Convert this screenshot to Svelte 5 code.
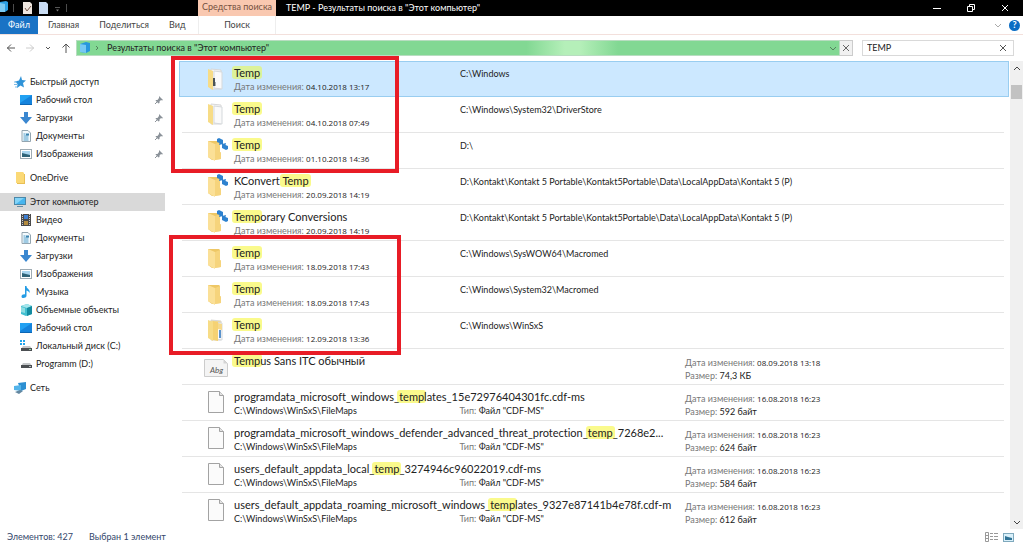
<script>
	let query = 'TEMP'

	const tabs = ['Главная', 'Поделиться', 'Вид']

	const groups = [
		{
			name: 'Быстрый доступ', icon: 'star', items: [
				{ name: 'Рабочий стол', icon: 'desktop', pinned: true },
				{ name: 'Загрузки', icon: 'download', pinned: true },
				{ name: 'Документы', icon: 'doc', pinned: true },
				{ name: 'Изображения', icon: 'picture', pinned: true }
			]
		},
		{ name: 'OneDrive', icon: 'folder', items: [] },
		{
			name: 'Этот компьютер', icon: 'pc', current: true, items: [
				{ name: 'Видео', icon: 'video' },
				{ name: 'Документы', icon: 'doc' },
				{ name: 'Загрузки', icon: 'download' },
				{ name: 'Изображения', icon: 'picture' },
				{ name: 'Музыка', icon: 'music' },
				{ name: 'Объемные объекты', icon: 'cube' },
				{ name: 'Рабочий стол', icon: 'desktop' },
				{ name: 'Локальный диск (C:)', icon: 'sysdisk' },
				{ name: 'Programm (D:)', icon: 'disk' }
			]
		},
		{ name: 'Сеть', icon: 'network', items: [] }
	]

	const maps = 'C:\\Windows\\WinSxS\\FileMaps'
	const kontakt = 'D:\\Kontakt\\Kontakt 5 Portable\\Kontakt5Portable\\Data\\LocalAppData\\Kontakt 5 (P)'

	const folders = [
		{ name: 'Temp', date: '04.10.2018 13:17', path: 'C:\\Windows', icon: 'dark', selected: true },
		{ name: 'Temp', date: '04.10.2018 07:49', path: 'C:\\Windows\\System32\\DriverStore', icon: 'open' },
		{ name: 'Temp', date: '01.10.2018 14:36', path: 'D:\\', icon: 'packed' },
		{ name: 'KConvert Temp', date: '20.09.2018 14:19', path: kontakt, icon: 'packed' },
		{ name: 'Temporary Conversions', date: '20.09.2018 14:19', path: kontakt, icon: 'packed' },
		{ name: 'Temp', date: '18.09.2018 17:43', path: 'C:\\Windows\\SysWOW64\\Macromed', icon: 'plain' },
		{ name: 'Temp', date: '18.09.2018 17:43', path: 'C:\\Windows\\System32\\Macromed', icon: 'plain' },
		{ name: 'Temp', date: '12.09.2018 13:36', path: 'C:\\Windows\\WinSxS', icon: 'filled' }
	]

	const files = [
		{ name: 'Tempus Sans ITC обычный', date: '08.09.2018 13:18', size: '74,3 КБ', icon: 'font' },
		{ name: 'programdata_microsoft_windows_templates_15e72976404301fc.cdf-ms', path: maps, date: '16.08.2018 16:23', size: '592 байт', icon: 'file' },
		{ name: 'programdata_microsoft_windows_defender_advanced_threat_protection_temp_7268e2...', path: maps, date: '16.08.2018 16:23', size: '624 байт', icon: 'file' },
		{ name: 'users_default_appdata_local_temp_3274946c96022019.cdf-ms', path: maps, date: '16.08.2018 16:23', size: '584 байт', icon: 'file' },
		{ name: 'users_default_appdata_roaming_microsoft_windows_templates_9327e87141b4e78f.cdf-m', path: maps, date: '16.08.2018 16:23', size: '612 байт', icon: 'file' }
	]

	// cut the name into plain and matching pieces
	const split = (name) => name.split(/(temp)/i).filter((s) => s)
	const isHit = (s) => s.toLowerCase() === 'temp'
</script>

{#snippet small(name)}
	<svg class="small" viewBox="0 0 12 12" aria-hidden="true">
		{#if name === 'star'}
			<path d="M7 0l1 4 4 .5-3 2.500 1 4.500-3.500-2L3 12l.5-4L1 5.500l4-1z" fill="#2f93d8" />
			<path d="M0 6h3M0 8.500h3M1 11h2" stroke="#7dbbe6" />
		{:else if name === 'desktop'}
			<rect y="1" width="12" height="10" fill="#1583dc" />
			<path d="M0 1h12L0 9z" fill="#22a1f2" />
			<path d="M0 10.500h12" stroke="#0c66b4" />
		{:else if name === 'download'}
			<path d="M4 0h4v5h4L6 12 0 5h4z" fill="#3a87d0" />
		{:else if name === 'doc'}
			<path d="M2 .5h6l2.500 2.500v8.500H2z" fill="#f4fafd" stroke="#93a5b0" />
			<path d="M3.500 4h2M3.500 6h5M3.500 8h5M3.500 10h5" stroke="#4c9cc9" />
			<path d="M6 4.500h3" stroke="#3b83ae" stroke-width="2" />
		{:else if name === 'picture'}
			<rect x=".5" y="1.500" width="11" height="9" fill="#fff" stroke="#9eabb3" />
			<path d="M2 3h8v6H2z" fill="#a9d5ee" />
			<path d="M2 5l4 1 4 1v2H2z" fill="#2f6478" />
		{:else if name === 'folder'}
			<path d="M2 0h7l1 1v10H2z" fill="#fbd976" />
			<path d="M10 2h1v10H3v-1h7z" fill="#e9bf55" />
		{:else if name === 'pc'}
			<rect x=".5" y="1.500" width="11" height="7" fill="#47b5ee" stroke="#4b88a9" />
			<path d="M1 2h9L2 8H1z" fill="#83d4f8" />
			<path d="M3 10.500h6" stroke="#668da3" />
		{:else if name === 'video'}
			<rect x="1" width="10" height="12" fill="#4a4a4a" />
			<path d="M2.500 0v12M9.500 0v12" stroke="#ccc" stroke-dasharray="1 1" />
			<path d="M4 1h4v4H4z" fill="#3d7ed0" />
			<path d="M4 7h4v4H4z" fill="#b48b3e" />
		{:else if name === 'music'}
			<path d="M5 0h1.500c0 3 4 3 3 7-1-2-2-2-3-2.500V10c0 2-5 3-5 .5C1.500 8.500 4 8 5 8.500z" fill="#249ce5" />
		{:else if name === 'cube'}
			<path d="M1 2l6-2 5 2v8l-6 2-5-2z" fill="#42bfd0" />
			<path d="M1 2l6-2 5 2-5 2z" fill="#a5e5eb" />
			<path d="M7 4l5-2v8l-5 2z" fill="#138ba0" />
			<path d="M1 3l4 1v5L1 8z" fill="#8fdde2" />
		{:else if name === 'sysdisk'}
			<path d="M0 0h2v2H0zM3 0h2v2H3zM0 3h2v2H0zM3 3h2v2H3z" fill="#21a5ec" />
			<path d="M3 6h7l2 3H1z" fill="#c4c7c9" />
			<path d="M1 8h11v3H1z" fill="#4b4f52" />
			<path d="M9 9.500h2" stroke="#8fd2a0" />
		{:else if name === 'disk'}
			<path d="M3 5h7l2 3H1z" fill="#c4c7c9" />
			<path d="M1 7h11v3H1z" fill="#4b4f52" />
			<path d="M9 8.500h2" stroke="#b8bcbf" />
		{:else if name === 'network'}
			<path d="M4 1l8-1v7l-5 2z" fill="#2c8fd2" />
			<path d="M0 4l7-1v6l-7-1z" fill="#53b4ea" />
			<path d="M1 10l4 2 4-3-3-1z" fill="#6387a0" />
		{/if}
	</svg>
{/snippet}

{#snippet large(name)}
	<svg class="large" viewBox="0 0 28 26" aria-hidden="true">
		{#if name === 'file'}
			<path d="M6.500 2.500h11l4 4v17h-15z" fill="#fbfbfb" stroke="#a3a3a3" />
			<path d="M17.500 2.500v4h4" fill="#e4e4e4" stroke="#a3a3a3" />
		{:else if name === 'font'}
			<path d="M2.500 6.500h19l4 4v13h-23z" fill="#f4f4f4" stroke="#ccc" />
			<path d="M21.500 6.500v4h4z" fill="#d4d4d4" />
			<text x="8" y="20" font-size="8" font-style="italic" fill="#555">Abg</text>
		{:else}
			{#if name === 'open' || name === 'dark' || name === 'filled'}
				<path d="M9 3l10 1v19H9z" fill={name === 'filled' ? '#f4d98a' : '#f4f4f4'} stroke="#d8d8d8" />
				<path d="M12 5l8 1v17l-8-1z" fill="#fafafa" stroke="#d5d9dc" />
				<path d="M6 3l5 2v19l-5-3z" fill="#f7dc86" />
				{#if name === 'dark'}
					<path d="M11 12h2v8h-2z" fill="#495357" />
					<path d="M13 16h1v4h-1z" fill="#a5adb0" />
				{:else if name === 'filled'}
					<path d="M11 4l5 1v19l-5-1z" fill="#f5d273" />
					<path d="M16 6l4 1v6l-4-1z" fill="#f5d98c" />
					<path d="M17 13h2v8h-2z" fill="#5b93cc" />
				{/if}
			{:else}
				<path d="M6 4h11l1 1v10l1 1v6l-9 1-4-3z" fill="#eec765" />
				<path d="M6 4l7 3v17l-7-4z" fill="#fbe097" />
				<path d="M13 7l5-2v10l1 1v6l-6 1z" fill="#f6d47c" />
			{/if}
			{#if name === 'packed'}
				<path d="M15 2l2-1 2 1 2 1v4l-4 1 .5-2-2.500-1z" fill="#2e82cf" />
				<path d="M26 12l-2 1-2-1-2-1V7l4-1-.5 2 2.500 1z" fill="#2e82cf" />
			{/if}
		{/if}
	</svg>
{/snippet}

{#snippet title(name)}
	<div class="title">{#each split(name) as part}{#if isHit(part)}<mark>{part}</mark>{:else}<span>{part}</span>{/if}{/each}</div>
{/snippet}

{#snippet cross()}
	<svg class="glyph" viewBox="0 0 8 8" aria-hidden="true"><path d="M1 1l6 6M7 1L1 7" /></svg>
{/snippet}

{#snippet chevron()}
	<svg class="glyph" viewBox="0 0 8 8" aria-hidden="true"><path d="M1 3l3 3 3-3" /></svg>
{/snippet}

<div class="window">
	<header class="titlebar">
		<div class="quick">
			<svg width="70" height="16" viewBox="0 0 70 16" aria-hidden="true">
				<path d="M0 2l6-1 2 1v8l-3 2H0z" fill="#2c9fe3" />
				<path d="M0 3l5 1v8H0z" fill="#7ccaf3" />
				<path d="M13.500 4v8M66.500 4v8" stroke="#4c4c4c" />
				<path d="M23 2h7l2 2v10h-9z" fill="#eee6df" />
				<path d="M25 8l2 3 4-5" fill="none" stroke="#7a5a4c" />
				<path d="M39 2h7l2 2v10h-9z" fill="#c9dcf3" />
				<path d="M55 7.500h5" stroke="#555" />
				<path d="M56 9.500h3l-1.500 2z" fill="#777" />
			</svg>
		</div>
		<div class="context">Средства поиска</div>
		<h1>TEMP - Результаты поиска в "Этот компьютер"</h1>
		<div class="controls">
			<button aria-label="Свернуть"><svg class="glyph" viewBox="0 0 8 8"><path d="M0 4.500h8" /></svg></button>
			<button aria-label="Свернуть в окно"><svg class="glyph" viewBox="0 0 8 8"><path d="M.5 2.500h5v5h-5zM2.500 2V.5h5v5H6" /></svg></button>
			<button aria-label="Закрыть">{@render cross()}</button>
		</div>
	</header>

	<nav class="ribbon">
		<div class="tabs">
			<button class="file">Файл</button>
			{#each tabs as tab}
				<button>{tab}</button>
			{/each}
		</div>
		<button class="search-tab">Поиск</button>
		<div class="ribbon-end">
			<button class="expand" aria-label="Развернуть ленту">{@render chevron()}</button>
			<button class="help" aria-label="Справка">?</button>
		</div>
	</nav>

	<div class="toolbar">
		<div class="arrows">
			<button aria-label="Назад"><svg width="10" height="10" viewBox="0 0 10 10"><path d="M9 5H1M5 1.500L1.500 5 5 8.500" /></svg></button>
			<button class="off" aria-label="Вперед"><svg width="10" height="10" viewBox="0 0 10 10"><path d="M1 5h8M5 1.500L8.500 5 5 8.500" /></svg></button>
			<button class="recent" aria-label="Последние расположения"><svg width="8" height="8" viewBox="0 0 8 8"><path d="M2 3l2 2 2-2" /></svg></button>
			<button aria-label="Вверх"><svg width="10" height="10" viewBox="0 0 10 10"><path d="M5 10V1M1.500 4.500L5 1l3.500 3.500" /></svg></button>
		</div>
		<div class="address">
			<svg width="12" height="12" viewBox="0 0 12 12" aria-hidden="true">
				<path d="M1 2l6-2 4 1v8l-4 2-6-1z" fill="#2797dd" />
				<path d="M1 2l6 1v8l-6-1z" fill="#77c9f3" />
			</svg>
			<svg width="4" height="6" viewBox="0 0 4 6" aria-hidden="true"><path d="M1 1l2 2-2 2" fill="none" stroke="#55805f" /></svg>
			<span class="crumb">Результаты поиска в "Этот компьютер"</span>
			<button class="drop" aria-label="Предыдущие расположения">{@render chevron()}</button>
		</div>
		<button class="stop" aria-label="Остановить">{@render cross()}</button>
		<div class="search">
			<input bind:value={query} aria-label="Поиск" />
			<button aria-label="Очистить">{@render cross()}</button>
		</div>
	</div>

	<div class="body">
		<aside>
			{#each groups as group}
				<div class="group">
					<a href="#top" class:current={group.current}>
						{@render small(group.icon)}
						<span>{group.name}</span>
					</a>
					{#each group.items as item}
						<a href="#top" class="child">
							{@render small(item.icon)}
							<span>{item.name}</span>
							{#if item.pinned}
								<svg class="pin" viewBox="0 0 8 8" aria-hidden="true">
									<path d="M4 0l4 4-1 .5-1-.5-1.500 1.500V7L3.500 7.500.5 4.500 1 4h1.500L4 2z" fill="#8b9299" />
									<path d="M2.500 5.500L0 8" stroke="#8b9299" />
								</svg>
							{/if}
						</a>
					{/each}
				</div>
			{/each}
		</aside>

		<main>
			<ul>
				{#each folders as f}
					<li class:selected={f.selected}>
						{@render large(f.icon)}
						<div class="name">
							{@render title(f.name)}
							<div class="sub"><span class="label">Дата изменения:</span> <time>{f.date}</time></div>
						</div>
						<div class="where">{f.path}</div>
					</li>
				{/each}
				{#each files as f}
					<li>
						{@render large(f.icon)}
						<div class="name wide">
							{@render title(f.name)}
							{#if f.path}
								<div class="sub pair">
									<span>{f.path}</span>
									<span><span class="label">Тип:</span> Файл "CDF-MS"</span>
								</div>
							{/if}
						</div>
						<div class="meta">
							<div><span class="label">Дата изменения:</span> <time>{f.date}</time></div>
							<div><span class="label">Размер:</span> {f.size}</div>
						</div>
					</li>
				{/each}
			</ul>
			<div class="frame first"></div>
			<div class="frame second"></div>
		</main>

		<div class="scrollbar">
			<button aria-label="Вверх"><svg class="glyph" viewBox="0 0 8 8"><path d="M1 6l3-3 3 3" /></svg></button>
			<div class="thumb"></div>
			<button class="down" aria-label="Вниз">{@render chevron()}</button>
		</div>
	</div>

	<footer>
		<span>Элементов: 427</span>
		<span>Выбран 1 элемент</span>
		<div class="views">
			<button aria-label="Таблица">
				<svg width="13" height="10" viewBox="0 0 13 10"><path d="M.5.500h3v9h-3zM0 3.500h4M0 6.500h4M5 1.500h3M9 1.500h4M5 4.500h3M9 4.500h4M5 7.500h3M9 7.500h4" fill="none" stroke="#999" /></svg>
			</button>
			<button aria-label="Крупные значки">
				<svg width="11" height="9" viewBox="0 0 11 9"><rect x=".5" y=".5" width="10" height="8" fill="#d9f0fa" stroke="#7fa9bd" /><path d="M2 3l3 1 4 1v2H2z" fill="#2f7396" /></svg>
			</button>
		</div>
	</footer>
</div>

<style>
	:global(body) {
		margin: 0;
		background: #fff;
	}

	.window {
		display: flex;
		flex-direction: column;
		min-height: 100vh;
		font-family: Lato, "Open Sans", sans-serif;
		font-size: 9px;
		font-variant-ligatures: none;
		line-height: 12px;
		color: #222;
	}

	button {
		display: flex;
		align-items: center;
		justify-content: center;
		padding: 0;
		border: 0;
		background: none;
		font: inherit;
		color: inherit;
	}

	svg {
		flex: none;
		display: block;
	}

	.glyph {
		width: 8px;
		height: 8px;
		fill: none;
		stroke: currentColor;
	}

	.titlebar {
		display: flex;
		height: 16px;
		background: #000;
		color: #fff;
	}

	.quick {
		width: 198px;
	}

	.context {
		width: 78px;
		background: #f9c8b0;
		color: #74503f;
		text-align: center;
		line-height: 14px;
		white-space: nowrap;
	}

	h1 {
		flex: 1;
		margin: 0;
		padding-left: 10px;
		font-size: 9px;
		font-weight: 400;
		line-height: 16px;
	}

	.controls {
		display: flex;
		padding-right: 1px;
	}

	.controls button {
		width: 34px;
	}

	.ribbon {
		display: flex;
		height: 18px;
		border-bottom: 1px solid #f3e0dc;
		color: #444;
	}

	.tabs {
		display: flex;
		width: 198px;
	}

	.tabs button {
		flex: none;
		padding: 0 10px;
	}

	.tabs .file {
		width: 38px;
		padding: 0;
		background: #1a73c5;
		color: #fff;
	}

	.search-tab {
		width: 78px;
		border: solid #eee;
		border-width: 0 1px;
	}

	.ribbon-end {
		display: flex;
		flex: 1;
		align-items: center;
		justify-content: flex-end;
		gap: 7px;
		padding-right: 3px;
	}

	.expand {
		color: #aaa;
	}

	.help {
		width: 11px;
		height: 11px;
		border-radius: 50%;
		background: #0a6cc4;
		color: #fff;
		font-weight: 700;
	}

	.toolbar {
		display: flex;
		align-items: center;
		height: 26px;
	}

	.arrows {
		display: flex;
		width: 76px;
		box-sizing: border-box;
		padding-left: 6px;
		gap: 9px;
	}

	.arrows svg {
		fill: none;
		stroke: #555;
	}

	.arrows .off svg {
		stroke: #ccc;
	}

	.address {
		display: flex;
		flex: 1;
		align-items: center;
		height: 16px;
		padding: 0 2px;
		box-sizing: border-box;
		border: 1px solid #b8ddc0;
		background: linear-gradient(90deg, #82d893 59%, #b5efb9 64%, #b5efb9 66%, #82d893 71%);
	}

	.crumb {
		flex: 1;
		padding-left: 8px;
	}

	.address svg + svg {
		margin-left: 4px;
	}

	.drop {
		color: #55805f;
	}

	.stop {
		width: 13px;
		height: 16px;
		border: 1px solid #ccc;
		border-left: 0;
		background: #f1f1f1;
		box-sizing: border-box;
		color: #666;
	}

	.search {
		display: flex;
		width: 152px;
		height: 16px;
		margin: 0 9px;
		padding: 0 6px 0 4px;
		box-sizing: border-box;
		border: 1px solid #d9d9d9;
	}

	.search input {
		flex: 1;
		min-width: 0;
		padding: 0;
		border: 0;
		outline: 0;
		font: inherit;
		color: inherit;
	}

	.search button {
		color: #555;
	}

	.body {
		display: flex;
		flex: 1;
	}

	aside {
		width: 165px;
		padding-top: 12px;
		box-sizing: border-box;
		flex: none;
	}

	.group {
		margin-bottom: 6px;
	}

	aside a {
		display: flex;
		align-items: center;
		gap: 4px;
		height: 18px;
		padding: 0 2px 0 14px;
		color: #222;
		text-decoration: none;
	}

	aside a.child {
		padding-left: 20px;
	}

	aside a.current {
		background: #d9d9d9;
	}

	.small {
		width: 12px;
		height: 12px;
	}

	.pin {
		width: 8px;
		height: 8px;
		margin-left: auto;
	}

	main {
		position: relative;
		flex: 1;
		min-width: 0;
		padding-left: 14px;
	}

	ul {
		margin: 0;
		padding: 0;
		list-style: none;
	}

	li {
		display: grid;
		grid-template-columns: 52px 226fr 225fr 319fr;
		height: 36px;
		margin: 0 6px 0 3px;
		box-sizing: border-box;
		border-bottom: 1px solid #e5e5e5;
	}

	li:last-child {
		border-color: transparent;
	}

	li.selected {
		margin: 0 1px 0 0;
		padding: 0 4px 0 2px;
		border: 1px solid #99cdf0;
		background: #cce8ff;
	}

	.large {
		width: 28px;
		height: 26px;
		margin: 4px 0 0 20px;
	}

	.name {
		padding-top: 3px;
		min-width: 0;
	}

	.selected .name {
		padding-top: 2px;
	}

	.name.wide {
		grid-column: 2 / 4;
	}

	.title {
		font-size: 11px;
		line-height: 17px;
		white-space: nowrap;
	}

	mark {
		margin: 0 -2px;
		padding: 0 2px;
		border-radius: 3px;
		background: #fafa8c;
		color: inherit;
	}

	/* keeps neighbouring letters above the highlight */
	.title span {
		position: relative;
	}

	.selected mark {
		background: #dcf29a;
	}

	.sub {
		line-height: 12px;
	}

	.pair {
		display: flex;
	}

	.pair > span {
		flex: 1;
	}

	.label {
		color: #777;
	}

	time {
		font-family: "Open Sans", sans-serif;
		font-size: 8px;
		line-height: 8px;
	}

	.where {
		grid-column: 3 / 5;
		padding-top: 7px;
	}

	.selected .where {
		padding-top: 6px;
	}

	.meta {
		padding-top: 7px;
		line-height: 13px;
	}

	.frame {
		position: absolute;
		box-sizing: border-box;
		border: 4px solid #e81c26;
	}

	.first {
		left: 6px;
		top: -5px;
		width: 228px;
		height: 117px;
	}

	.second {
		left: 4px;
		top: 174px;
		width: 232px;
		height: 120px;
	}

	.scrollbar {
		display: flex;
		flex-direction: column;
		width: 13px;
		background: #f0f0f0;
		color: #444;
	}

	.scrollbar button {
		height: 14px;
	}

	.thumb {
		height: 14px;
		margin: 10px 1px 0;
		background: #c2c2c2;
	}

	.scrollbar .down {
		margin-top: auto;
	}

	footer {
		display: flex;
		align-items: center;
		gap: 16px;
		height: 16px;
		padding: 0 9px 0 7px;
		color: #33466b;
	}

	.views {
		display: flex;
		gap: 5px;
		margin-left: auto;
	}
</style>
